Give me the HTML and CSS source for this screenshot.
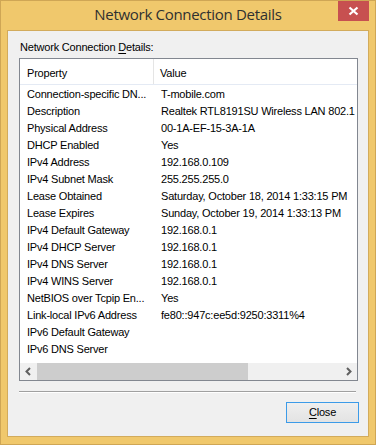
FILE: index.html
```html
<!DOCTYPE html>
<html>
<head>
<meta charset="utf-8">
<link rel="stylesheet" href="styles.css">
</head>
<body>
<div class="window">
  <div class="titlebar">
    <span></span>
    <span class="title">Network Connection Details</span>
    <span class="close-x">
      <svg width="31" height="20" viewBox="0 0 31 20"><path d="M11.5 6.5 L19.5 13.5 M19.5 6.5 L11.5 13.5" stroke="#fff" stroke-width="2.2" fill="none"/></svg>
    </span>
  </div>
  <div class="client">
    <div class="label">Network Connection <u>D</u>etails:</div>
    <div class="listbox">
      <div class="header">
        <div class="hcell col1">Property</div>
        <div class="hcell col2">Value</div>
      </div>
      <div class="rows">
        <div class="row"><span class="c1">Connection-specific DN...</span><span class="c2">T-mobile.com</span></div>
        <div class="row"><span class="c1">Description</span><span class="c2">Realtek RTL8191SU Wireless LAN 802.1</span></div>
        <div class="row"><span class="c1">Physical Address</span><span class="c2">00-1A-EF-15-3A-1A</span></div>
        <div class="row"><span class="c1">DHCP Enabled</span><span class="c2">Yes</span></div>
        <div class="row"><span class="c1">IPv4 Address</span><span class="c2">192.168.0.109</span></div>
        <div class="row"><span class="c1">IPv4 Subnet Mask</span><span class="c2">255.255.255.0</span></div>
        <div class="row"><span class="c1">Lease Obtained</span><span class="c2">Saturday, October 18, 2014 1:33:15 PM</span></div>
        <div class="row"><span class="c1">Lease Expires</span><span class="c2">Sunday, October 19, 2014 1:33:13 PM</span></div>
        <div class="row"><span class="c1">IPv4 Default Gateway</span><span class="c2">192.168.0.1</span></div>
        <div class="row"><span class="c1">IPv4 DHCP Server</span><span class="c2">192.168.0.1</span></div>
        <div class="row"><span class="c1">IPv4 DNS Server</span><span class="c2">192.168.0.1</span></div>
        <div class="row"><span class="c1">IPv4 WINS Server</span><span class="c2">192.168.0.1</span></div>
        <div class="row"><span class="c1">NetBIOS over Tcpip En...</span><span class="c2">Yes</span></div>
        <div class="row"><span class="c1">Link-local IPv6 Address</span><span class="c2">fe80::947c:ee5d:9250:3311%4</span></div>
        <div class="row"><span class="c1">IPv6 Default Gateway</span><span class="c2"></span></div>
        <div class="row"><span class="c1">IPv6 DNS Server</span><span class="c2"></span></div>
      </div>
      <div class="hscroll">
        <div class="sbtn">
          <svg width="17" height="17" viewBox="0 0 17 17"><path d="M10 5 L6.5 8.5 L10 12" stroke="#606060" stroke-width="2" fill="none"/></svg>
        </div>
        <div class="track">
          <div class="thumb"></div>
        </div>
        <div class="sbtn">
          <svg width="17" height="17" viewBox="0 0 17 17"><path d="M7 5 L10.5 8.5 L7 12" stroke="#606060" stroke-width="2" fill="none"/></svg>
        </div>
      </div>
    </div>
    <div class="separator"></div>
    <div class="footer">
      <button class="btn"><u>C</u>lose</button>
    </div>
  </div>
</div>
</body>
</html>
```

FILE: styles.css
```css
html, body {
  margin: 0;
  padding: 0;
  background: #ffffff;
}

.window {
  width: 376px;
  height: 445px;
  box-sizing: border-box;
  border: 1px solid #cfa655;
  background: #f0c86c;
  padding: 0 6px 7px 6px;
  display: flex;
  flex-direction: column;
}

.titlebar {
  height: 29px;
  display: grid;
  grid-template-columns: 1fr auto 1fr;
  align-items: start;
  margin: 0 -6px;
}

.title {
  font-family: "Open Sans", "Noto Sans", sans-serif;
  font-size: 15px;
  color: #2f3030;
  line-height: 26px;
  letter-spacing: -0.3px;
}

.close-x {
  justify-self: end;
  width: 31px;
  height: 20px;
  background: #c75050;
  margin-right: 6px;
  display: block;
}

.close-x svg {
  display: block;
}

.client {
  flex: 1;
  border: 1px solid #d2ab5c;
  background: #f0f0f0;
  padding: 0 10px 0 11px;
  display: flex;
  flex-direction: column;
  font-family: "Liberation Sans", Arial, sans-serif;
  font-size: 11px;
  letter-spacing: -0.2px;
  color: #000;
}

.label {
  height: 27px;
  line-height: 13px;
  padding-top: 10px;
  box-sizing: border-box;
  padding-left: 1px;
}

.label u, .btn u {
  text-decoration-thickness: 1px;
  text-underline-offset: 2px;
}

.listbox {
  height: 323px;
  box-sizing: border-box;
  border: 1px solid #828790;
  background: #ffffff;
  display: flex;
  flex-direction: column;
  overflow: hidden;
}

.header {
  height: 26px;
  box-sizing: border-box;
  border-bottom: 1px solid #e4eaf4;
  display: flex;
  flex: none;
}

.hcell {
  line-height: 25px;
  padding-top: 2px;
  box-sizing: border-box;
  padding-left: 7px;
  white-space: nowrap;
}

.col1 {
  width: 134px;
  border-right: 1px solid #e5e5e5;
  flex: none;
}

.col2 {
  flex: 1;
  padding-left: 6px;
}

.rows {
  flex: 1;
  overflow: hidden;
  padding-top: 1px;
}

.row {
  height: 17px;
  line-height: 17px;
  display: flex;
  white-space: nowrap;
}

.c1 {
  width: 134px;
  flex: none;
  padding-left: 7px;
  box-sizing: border-box;
  overflow: hidden;
}

.c2 {
  padding-left: 7px;
  white-space: nowrap;
}

.hscroll {
  height: 17px;
  flex: none;
  display: flex;
  background: #f0f0f0;
}

.sbtn {
  width: 17px;
  height: 17px;
  flex: none;
}

.sbtn svg {
  display: block;
}

.track {
  flex: 1;
  display: flex;
}

.thumb {
  width: 211px;
  height: 17px;
  background: #cdcdcd;
}

.separator {
  margin-top: 10px;
  height: 1px;
  background: #a0a0a0;
  border-bottom: 1px solid #ffffff;
  margin-right: 2px;
}

.footer {
  display: flex;
  justify-content: flex-end;
  padding-top: 9px;
}

.btn {
  width: 73px;
  height: 21px;
  margin-right: -1px;
  border: 1px solid #3c9be8;
  background: linear-gradient(#efefef, #e3e3e3);
  font-family: "Liberation Sans", Arial, sans-serif;
  font-size: 11px;
  letter-spacing: -0.2px;
  color: #000;
  padding: 0;
  line-height: 19px;
}
```
